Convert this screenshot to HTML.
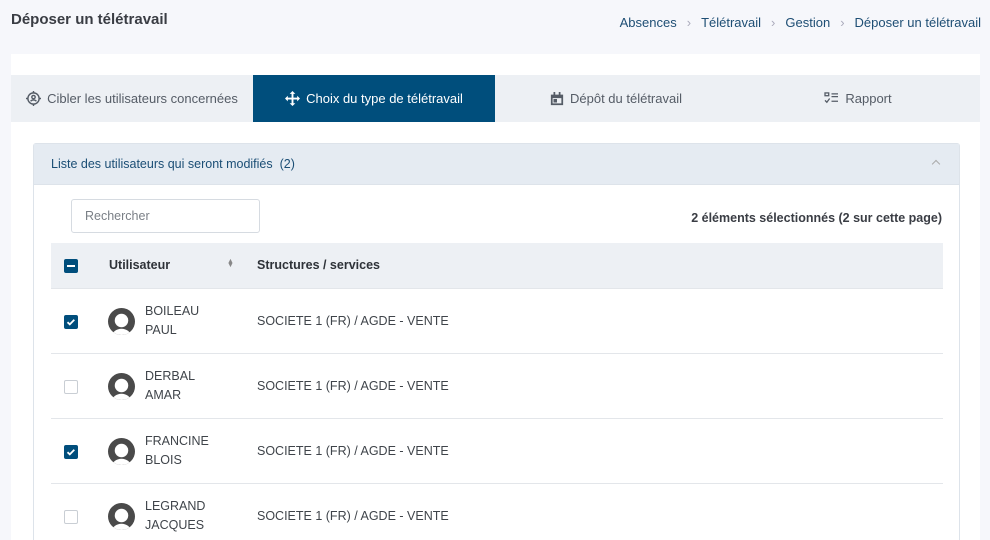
<!DOCTYPE html>
<html><head><meta charset="utf-8"><style>
*{box-sizing:border-box;margin:0;padding:0}
html,body{width:990px;height:540px;overflow:hidden}
body{background:#f6f7fb;font-family:"Liberation Sans",sans-serif;color:#3b3f45;position:relative}
.title{position:absolute;left:11px;top:11px;font-size:15px;font-weight:bold;color:#3a3d44}
.bc{position:absolute;right:9px;top:15px;font-size:13px;color:#1e4e74}
.bc span.s{color:#aab;margin:0 10px}
.card{position:absolute;left:11px;top:54px;width:969px;height:486px;background:#fff;overflow:hidden}
.tabs{position:absolute;left:0;top:21px;width:969px;height:47px;background:#edf0f4;display:flex;font-size:13px;color:#555c66}
.tab{width:242px;display:flex;align-items:center;justify-content:center;gap:6px}
.tab.act{background:#004e7c;color:#fff}
.panel{position:absolute;left:22px;top:89px;width:927px;height:420px;border:1px solid #dde3ea;border-radius:3px}
.ph{height:41px;background:#e5ebf2;border-bottom:1px solid #dde3ea;font-size:12.5px;color:#1b4e75;padding:13px 0 0 17px;position:relative}
.ph .car{position:absolute;right:20px;top:17px;width:6px;height:6px;border-left:1px solid #aaa;border-top:1px solid #aaa;transform:rotate(45deg)}
.search{position:absolute;left:37px;top:55px;width:189px;height:34px;border:1px solid #d6dbe1;border-radius:3px;font-size:12.5px;color:#7a7f86;padding:9px 13px}
.sel{position:absolute;right:17px;top:67px;font-size:12.5px;font-weight:bold;color:#3a3d44}
.th{position:absolute;left:17px;top:99px;width:892px;height:45px;background:#edf0f4;font-size:12.5px;font-weight:bold;color:#2e3238}
.row{position:absolute;left:17px;width:892px;height:65px;border-top:1px solid #e3e6ea;font-size:12.5px;color:#3f444a}
.cb{position:absolute;left:13px;width:14px;height:14px;border-radius:2px}
.cb.on{background:#004e7c}
.cb.off{border:1px solid #c9ced4;background:#fff}
.av{position:absolute;left:57px;top:19px}
.nm{position:absolute;left:94px;top:13px;line-height:19px}
.st{position:absolute;left:206px;top:25px}
</style></head><body>
<div class="title">Déposer un télétravail</div>
<div class="bc">Absences<span class="s">›</span>Télétravail<span class="s">›</span>Gestion<span class="s">›</span>Déposer un télétravail</div>
<div class="card">
<div class="tabs">
<div class="tab"><svg width="15" height="15" viewBox="0 0 16 16" fill="none" stroke="#555c66" stroke-width="1.5"><circle cx="8" cy="8" r="6"/><circle cx="8" cy="6.5" r="1.8"/><path d="M5 11c1-2 5-2 6 0M8 0v2M8 14v2M0 8h2M14 8h2"/></svg>Cibler les utilisateurs concernées</div>
<div class="tab act"><svg width="15" height="15" viewBox="0 0 16 16" fill="#fff"><path d="M8 0l3 3H9v4h4V5l3 3-3 3V9H9v4h2l-3 3-3-3h2V9H3v2L0 8l3-3v2h4V3H5z"/></svg>Choix du type de télétravail</div>
<div class="tab"><svg width="14" height="14" viewBox="0 0 16 16" fill="#555c66"><path d="M1 3h14v12H1zM4 0h2v3H4zM10 0h2v3h-2z"/><rect x="3" y="7" width="10" height="6" fill="#edf0f4"/><rect x="4" y="8" width="4" height="4"/></svg>Dépôt du télétravail</div>
<div class="tab"><svg width="15" height="13" viewBox="0 0 16 14" fill="none" stroke="#555c66" stroke-width="1.4"><rect x="1" y="1" width="4" height="3"/><path d="M8 2h7M8 5h7M1 9l2 2 3-4M8 10h7"/></svg>Rapport</div>
</div>
<div class="panel">
<div class="ph">Liste des utilisateurs qui seront modifiés&nbsp; (2)<span class="car"></span></div>
<div class="search">Rechercher</div>
<div class="sel">2 éléments sélectionnés (2 sur cette page)</div>
<div class="th"><div class="cb on" style="top:16px"><div style="position:absolute;left:3px;top:6px;width:8px;height:2px;background:#fff"></div></div>
<span style="position:absolute;left:58px;top:15px">Utilisateur</span>
<span style="position:absolute;left:176px;top:17px;font-size:7px;color:#888;line-height:4px">▲<br>▼</span>
<span style="position:absolute;left:206px;top:15px">Structures / services</span></div>
<div class="row" style="top:144px"><div class="cb on" style="top:26px"><svg width="14" height="14" viewBox="0 0 14 14"><path d="M3.5 7.2l2.3 2.2 4.5-4.6" stroke="#fff" stroke-width="1.8" fill="none"/></svg></div><svg class="av" width="27" height="27" viewBox="0 0 26 26"><defs><clipPath id="c1"><circle cx="13" cy="13" r="13"/></clipPath></defs><g clip-path="url(#c1)"><rect width="26" height="26" fill="#4a4a4a"/><circle cx="13" cy="12" r="6.5" fill="#fff"/><ellipse cx="13" cy="27" rx="9" ry="7" fill="#fff"/></g></svg><div class="nm">BOILEAU<br>PAUL</div><div class="st">SOCIETE 1 (FR) / AGDE - VENTE</div></div>
<div class="row" style="top:209px"><div class="cb off" style="top:26px"></div><svg class="av" width="27" height="27" viewBox="0 0 26 26"><g clip-path="url(#c1)"><rect width="26" height="26" fill="#4a4a4a"/><circle cx="13" cy="12" r="6.5" fill="#fff"/><ellipse cx="13" cy="27" rx="9" ry="7" fill="#fff"/></g></svg><div class="nm">DERBAL<br>AMAR</div><div class="st">SOCIETE 1 (FR) / AGDE - VENTE</div></div>
<div class="row" style="top:274px"><div class="cb on" style="top:26px"><svg width="14" height="14" viewBox="0 0 14 14"><path d="M3.5 7.2l2.3 2.2 4.5-4.6" stroke="#fff" stroke-width="1.8" fill="none"/></svg></div><svg class="av" width="27" height="27" viewBox="0 0 26 26"><g clip-path="url(#c1)"><rect width="26" height="26" fill="#4a4a4a"/><circle cx="13" cy="12" r="6.5" fill="#fff"/><ellipse cx="13" cy="27" rx="9" ry="7" fill="#fff"/></g></svg><div class="nm">FRANCINE<br>BLOIS</div><div class="st">SOCIETE 1 (FR) / AGDE - VENTE</div></div>
<div class="row" style="top:339px"><div class="cb off" style="top:26px"></div><svg class="av" width="27" height="27" viewBox="0 0 26 26"><g clip-path="url(#c1)"><rect width="26" height="26" fill="#4a4a4a"/><circle cx="13" cy="12" r="6.5" fill="#fff"/><ellipse cx="13" cy="27" rx="9" ry="7" fill="#fff"/></g></svg><div class="nm">LEGRAND<br>JACQUES</div><div class="st">SOCIETE 1 (FR) / AGDE - VENTE</div></div>
</div>
</div>
</body></html>
